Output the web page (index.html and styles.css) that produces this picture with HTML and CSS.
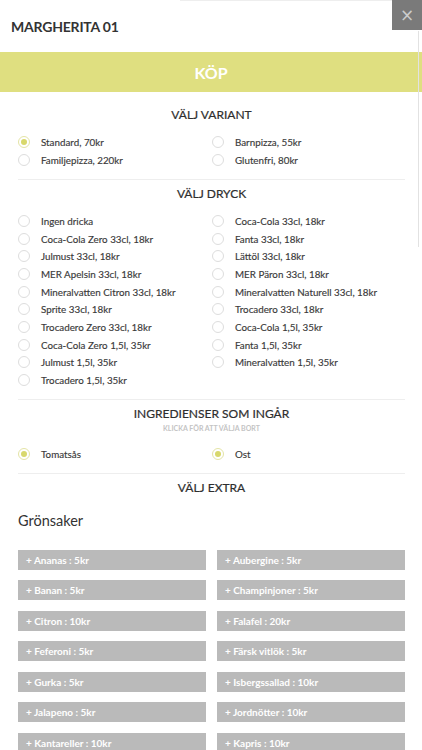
FILE: index.html
```html
<!DOCTYPE html>
<html lang="sv">
<head>
  <meta charset="UTF-8" />
  <title>Margherita 01</title>
  <link rel="stylesheet" href="styles.css">
</head>
<body>
  <div class="modal">
    <div class="top-edge"></div>
    <button class="close-btn">&times;</button>
    <div class="scroll-thumb"></div>

    <header class="modal-header">
      <h2 class="product-title">MARGHERITA 01</h2>
    </header>

    <button class="buy-btn">KÖP</button>

    <div class="content">
      <section class="group">
        <h3 class="group-title">VÄLJ VARIANT</h3>
        <div class="options">
          <label class="option"><span class="radio checked"></span>Standard, 70kr</label>
          <label class="option"><span class="radio"></span>Barnpizza, 55kr</label>
          <label class="option"><span class="radio"></span>Familjepizza, 220kr</label>
          <label class="option"><span class="radio"></span>Glutenfri, 80kr</label>
        </div>
      </section>

      <section class="group">
        <h3 class="group-title">VÄLJ DRYCK</h3>
        <div class="options drinks">
          <label class="option"><span class="radio"></span>Ingen dricka</label>
          <label class="option"><span class="radio"></span>Coca-Cola 33cl, 18kr</label>
          <label class="option"><span class="radio"></span>Coca-Cola Zero 33cl, 18kr</label>
          <label class="option"><span class="radio"></span>Fanta 33cl, 18kr</label>
          <label class="option"><span class="radio"></span>Julmust 33cl, 18kr</label>
          <label class="option"><span class="radio"></span>Lättöl 33cl, 18kr</label>
          <label class="option"><span class="radio"></span>MER Apelsin 33cl, 18kr</label>
          <label class="option"><span class="radio"></span>MER Päron 33cl, 18kr</label>
          <label class="option"><span class="radio"></span>Mineralvatten Citron 33cl, 18kr</label>
          <label class="option"><span class="radio"></span>Mineralvatten Naturell 33cl, 18kr</label>
          <label class="option"><span class="radio"></span>Sprite 33cl, 18kr</label>
          <label class="option"><span class="radio"></span>Trocadero 33cl, 18kr</label>
          <label class="option"><span class="radio"></span>Trocadero Zero 33cl, 18kr</label>
          <label class="option"><span class="radio"></span>Coca-Cola 1,5l, 35kr</label>
          <label class="option"><span class="radio"></span>Coca-Cola Zero 1,5l, 35kr</label>
          <label class="option"><span class="radio"></span>Fanta 1,5l, 35kr</label>
          <label class="option"><span class="radio"></span>Julmust 1,5l, 35kr</label>
          <label class="option"><span class="radio"></span>Mineralvatten 1,5l, 35kr</label>
          <label class="option"><span class="radio"></span>Trocadero 1,5l, 35kr</label>
        </div>
      </section>

      <section class="group">
        <h3 class="group-title">INGREDIENSER SOM INGÅR</h3>
        <div class="group-hint">KLICKA FÖR ATT VÄLJA BORT</div>
        <div class="options ingredients">
          <label class="option"><span class="radio checked"></span>Tomatsås</label>
          <label class="option"><span class="radio checked"></span>Ost</label>
        </div>
      </section>

      <section class="group last">
        <h3 class="group-title">VÄLJ EXTRA</h3>
        <h4 class="extra-cat">Grönsaker</h4>
        <div class="extras">
          <button class="extra-btn">+ Ananas : 5kr</button>
          <button class="extra-btn">+ Aubergine : 5kr</button>
          <button class="extra-btn">+ Banan : 5kr</button>
          <button class="extra-btn">+ Champinjoner : 5kr</button>
          <button class="extra-btn">+ Citron : 10kr</button>
          <button class="extra-btn">+ Falafel : 20kr</button>
          <button class="extra-btn">+ Feferoni : 5kr</button>
          <button class="extra-btn">+ Färsk vitlök : 5kr</button>
          <button class="extra-btn">+ Gurka : 5kr</button>
          <button class="extra-btn">+ Isbergssallad : 10kr</button>
          <button class="extra-btn">+ Jalapeno : 5kr</button>
          <button class="extra-btn">+ Jordnötter : 10kr</button>
          <button class="extra-btn">+ Kantareller : 10kr</button>
          <button class="extra-btn">+ Kapris : 10kr</button>
        </div>
      </section>
    </div>
  </div>
</body>
</html>
```

FILE: styles.css
```css
body {
  margin: 0;
  font-family: Lato, 'Open Sans', sans-serif;
  background: #fff;
  color: #333;
}

.modal {
  position: relative;
  height: 750px;
  overflow: hidden;
}

.top-edge {
  position: absolute;
  top: 0;
  left: 180px;
  width: 212px;
  height: 1px;
  background: #eee;
}

.close-btn {
  position: absolute;
  top: 0;
  right: 0;
  width: 30px;
  height: 30px;
  border: none;
  padding: 0;
  background: #7a7a7a;
  color: #ccc;
  font-size: 17px;
  line-height: 28px;
  font-family: 'DejaVu Sans', sans-serif;
}

.scroll-thumb {
  position: absolute;
  top: 31px;
  right: 3px;
  width: 1px;
  height: 216px;
  background: #e2e2e2;
}

.modal-header {
  height: 52px;
  display: flex;
  align-items: center;
  padding: 0 11px;
  box-sizing: border-box;
}

.product-title {
  margin: 1px 0 0;
  font-size: 14px;
  font-weight: bold;
  color: #333;
  letter-spacing: -0.2px;
}

.buy-btn {
  display: block;
  width: 100%;
  height: 40px;
  border: none;
  background: #dfdf80;
  color: #fff;
  font-family: Lato, sans-serif;
  font-size: 16px;
  font-weight: bold;
}

.content {
  padding: 0 17px 0 18px;
}

.group {
  border-bottom: 1px solid #eee;
  padding-bottom: 10px;
}

.group:first-child {
  padding-top: 9px;
}

.group.last {
  border-bottom: none;
}

.group-title {
  margin: 4px 0 0;
  height: 20px;
  line-height: 20px;
  text-align: center;
  font-size: 12px;
  font-weight: normal;
  color: #2e2e2e;
  -webkit-text-stroke: 0.2px #2e2e2e;
}

.group-hint {
  height: 8px;
  line-height: 8px;
  text-align: center;
  font-size: 7px;
  font-weight: bold;
  color: #c4c4c4;
}

.options {
  display: grid;
  grid-template-columns: 194px 1fr;
  margin-top: 8px;
}

.options.ingredients {
  margin-top: 13px;
}

.option {
  display: flex;
  align-items: center;
  height: 18px;
  font-size: 9.8px;
  color: #3a3a3a;
  -webkit-text-stroke: 0.15px #3a3a3a;
}

.drinks .option {
  height: 17.7px;
}

.radio {
  width: 10px;
  height: 10px;
  border: 1px solid #ddd;
  border-radius: 50%;
  margin-right: 11px;
  display: flex;
  align-items: center;
  justify-content: center;
  flex-shrink: 0;
}

.radio.checked {
  border-color: #e4e4a6;
}

.radio.checked::after {
  content: '';
  width: 6px;
  height: 6px;
  border-radius: 50%;
  background: #d8d86c;
}

.extra-cat {
  margin: 13px 0 0;
  height: 20px;
  line-height: 20px;
  font-size: 14.5px;
  font-weight: normal;
  color: #333;
}

.extras {
  display: grid;
  grid-template-columns: 1fr 1fr;
  column-gap: 11px;
  row-gap: 10.5px;
  margin-top: 19px;
}

.extra-btn {
  height: 20px;
  border: none;
  background: #bababa;
  color: #fff;
  font-family: Lato, sans-serif;
  font-size: 10px;
  font-weight: bold;
  text-align: left;
  padding: 0 8px;
}
```
